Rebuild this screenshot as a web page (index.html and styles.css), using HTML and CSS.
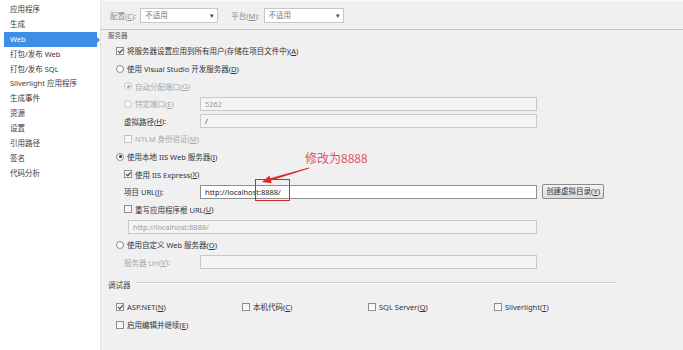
FILE: index.html
```html
<!DOCTYPE html>
<html>
<head>
    <meta charset="UTF-8">
    <title>项目属性 - Web</title>
    <link rel="stylesheet" href="styles.css">
</head>
<body>
<div class="window">
    <!-- 左侧分类列表 -->
    <ul class="side">
        <li>应用程序</li>
        <li>生成</li>
        <li class="active">Web</li>
        <li>打包/发布 Web</li>
        <li>打包/发布 SQL</li>
        <li>Silverlight 应用程序</li>
        <li>生成事件</li>
        <li>资源</li>
        <li>设置</li>
        <li>引用路径</li>
        <li>签名</li>
        <li>代码分析</li>
    </ul>

    <div class="main">
        <div class="toolbar">
            <span class="dim">配置(<u>C</u>):</span>
            <div class="select first">不适用<span class="caret">▾</span></div>
            <span class="dim">平台(<u>M</u>):</span>
            <div class="select">不适用<span class="caret">▾</span></div>
        </div>

        <div class="content">
            <div class="group-top">服务器</div>
            <div class="rows">
                <div class="row"><span class="chk on"></span>将服务器设置应用到所有用户(存储在项目文件中)(<u>A</u>)</div>
                <div class="row"><span class="radio"></span>使用 Visual Studio 开发服务器(<u>D</u>)</div>
                <div class="row sub off"><span class="radio on"></span>自动分配端口(<u>G</u>)</div>
                <div class="row sub off">
                    <span class="label"><span class="radio"></span>特定端口(<u>E</u>)</span>
                    <div class="field">5262</div>
                </div>
                <div class="row sub">
                    <span class="label">虚拟路径(<u>H</u>):</span>
                    <div class="field dark">/</div>
                </div>
                <div class="row sub off"><span class="chk"></span>NTLM 身份验证(<u>M</u>)</div>
                <div class="row"><span class="radio on"></span>使用本地 IIS Web 服务器(<u>I</u>)</div>
                <div class="row sub"><span class="chk on"></span>使用 IIS Express(<u>X</u>)</div>
                <div class="row sub">
                    <span class="label">项目 URL(<u>J</u>):</span>
                    <div class="field live">http://localhost:8888/</div>
                    <div class="btn">创建虚拟目录(<u>Y</u>)</div>
                </div>
                <div class="row sub"><span class="chk"></span>重写应用程序根 URL(<u>U</u>)</div>
                <div class="row sub">
                    <div class="field wide">http://localhost:8888/</div>
                </div>
                <div class="row"><span class="radio"></span>使用自定义 Web 服务器(<u>O</u>)</div>
                <div class="row sub">
                    <span class="label off">服务器 Url(<u>V</u>):</span>
                    <div class="field"></div>
                </div>
            </div>

            <div class="group">
                <span>调试器</span>
                <span class="rule"></span>
            </div>
            <div class="dbg-row">
                <div class="dbg-item"><span class="chk on"></span>ASP.NET(<u>N</u>)</div>
                <div class="dbg-item"><span class="chk"></span>本机代码(<u>C</u>)</div>
                <div class="dbg-item"><span class="chk"></span>SQL Server(<u>Q</u>)</div>
                <div class="dbg-item"><span class="chk"></span>Silverlight(<u>T</u>)</div>
            </div>
            <div class="dbg-row">
                <div class="dbg-item"><span class="chk"></span>启用编辑并继续(<u>E</u>)</div>
            </div>
        </div>
    </div>

    <!-- 截图上的红色标注 -->
    <div class="note">修改为8888</div>
    <div class="note-box"></div>
    <svg class="note-arrow" width="56" height="24" viewBox="0 0 56 24">
        <polygon points="50.9,3.5 51.1,4.5 13,16.6 13.7,19.2 4,18 11.5,11.6 12.2,14.2" fill="#e02828"/>
    </svg>
</div>
</body>
</html>
```

FILE: styles.css
```css
/* Общие */
body {
  margin: 0;
  background: #f0f0f0;
  font-family: "Noto Sans", "Noto Sans CJK SC", sans-serif;
  font-size: 7.5px;
  color: #333;
}

u {
  text-decoration: underline;
}

.window {
  position: relative;
  display: flex;
  width: 683px;
  height: 350px;
  overflow: hidden;
}

/* Левое меню */
.side {
  list-style: none;
  margin: 0;
  padding: 2px 0 0;
  width: 100px;
  background: #fff;
  border-right: 1px solid #e4e4e4;
}

.side li {
  height: 14.9px;
  line-height: 14.9px;
  padding-left: 10px;
  white-space: nowrap;
  color: #3a3a3a;
}

.side li.active {
  position: relative;
  margin: 0 3px 0 4px;
  padding-left: 6px;
  background: #3d8ee6;
  color: #fff;
}

.side li.active::after {
  content: "";
  position: absolute;
  right: -3px;
  top: 5px;
  border-left: 3px solid #3d8ee6;
  border-top: 3px solid transparent;
  border-bottom: 3px solid transparent;
}

/* Основная часть */
.main {
  flex: 1;
  display: flex;
  flex-direction: column;
}

.toolbar {
  height: 28px;
  border-top: 1px solid #fafafa;
  border-bottom: 1px solid #c4c4c4;
  display: flex;
  align-items: center;
  padding-left: 9px;
}

.dim {
  color: #8c8c8c;
  margin-right: 4px;
}

.select {
  position: relative;
  box-sizing: border-box;
  width: 80px;
  height: 15px;
  line-height: 13px;
  padding-left: 4px;
  border: 1px solid #c6c6c6;
  background: #fff;
  color: #777;
}

.select.first {
  width: 78px;
  margin-right: 13px;
}

.caret {
  position: absolute;
  right: 3px;
  top: 0;
  color: #444;
  font-size: 7px;
}

.content {
  flex: 1;
  overflow: hidden;
}

.group-top {
  height: 9px;
  line-height: 9px;
  padding: 1px 0 0 7px;
  color: #555;
  font-size: 6.5px;
}

.rows {
  padding-top: 2.2px;
}

.row {
  height: 17.6px;
  display: flex;
  align-items: center;
  padding-left: 15px;
  white-space: nowrap;
}

.row.sub {
  padding-left: 23px;
}

.off {
  color: #a8a8a8;
}

.label {
  width: 76px;
  display: flex;
  align-items: center;
}

/* Флажки и переключатели */
.chk,
.radio {
  position: relative;
  box-sizing: border-box;
  width: 8px;
  height: 8px;
  margin-right: 3px;
  border: 1px solid #8e8e8e;
  background: linear-gradient(#f4f4f4, #fff);
  flex: none;
}

.radio {
  border-radius: 50%;
}

.off .chk,
.off .radio {
  border-color: #c4c4c4;
}

.chk.on::after {
  content: "";
  position: absolute;
  left: 1.8px;
  top: 0;
  width: 1.6px;
  height: 3.6px;
  border: solid #333;
  border-width: 0 1.2px 1.2px 0;
  transform: rotate(40deg);
}

.radio.on::after {
  content: "";
  position: absolute;
  left: 1.5px;
  top: 1.5px;
  width: 3px;
  height: 3px;
  border-radius: 50%;
  background: #333;
}

.off .radio.on::after {
  background: #a8a8a8;
}

/* Поля ввода */
.field {
  box-sizing: border-box;
  width: 337px;
  height: 14px;
  line-height: 12px;
  padding-left: 4px;
  border: 1px solid #c9c9c9;
  background: #f4f4f4;
  color: #9a9a9a;
}

.field.dark {
  color: #444;
}

.field.live {
  background: #fff;
  border-color: #8f8f8f;
  color: #222;
}

.field.wide {
  width: 409px;
  margin-left: 4px;
}

.btn {
  box-sizing: border-box;
  width: 62px;
  height: 15px;
  line-height: 13px;
  margin-left: 5px;
  text-align: center;
  border: 1px solid #8a8a8a;
  border-radius: 2px;
  background: linear-gradient(#f4f4f4, #dcdcdc);
  color: #333;
}

/* Отладчик */
.group {
  height: 10px;
  margin-top: 9px;
  display: flex;
  align-items: center;
  padding-left: 7px;
  color: #444;
}

.rule {
  flex: 1;
  margin: -3px 68px 0 6px;
  border-top: 1px solid #c9c9c9;
  border-bottom: 1px solid #fff;
}

.dbg-row {
  height: 18px;
  display: flex;
  align-items: center;
  padding-left: 15px;
  white-space: nowrap;
}

.group + .dbg-row {
  margin-top: 8px;
}

.dbg-item {
  width: 126px;
  display: flex;
  align-items: center;
}

/* Красная пометка */
.note {
  position: absolute;
  left: 305px;
  top: 150px;
  font-family: "Noto Sans CJK SC", sans-serif;
  font-size: 12px;
  line-height: 16px;
  color: #e05068;
}

.note-box {
  position: absolute;
  left: 255px;
  top: 179px;
  width: 35px;
  height: 22px;
  box-sizing: border-box;
  border: 1.5px solid #d42a2a;
}

.note-arrow {
  position: absolute;
  left: 258px;
  top: 164px;
}
```
